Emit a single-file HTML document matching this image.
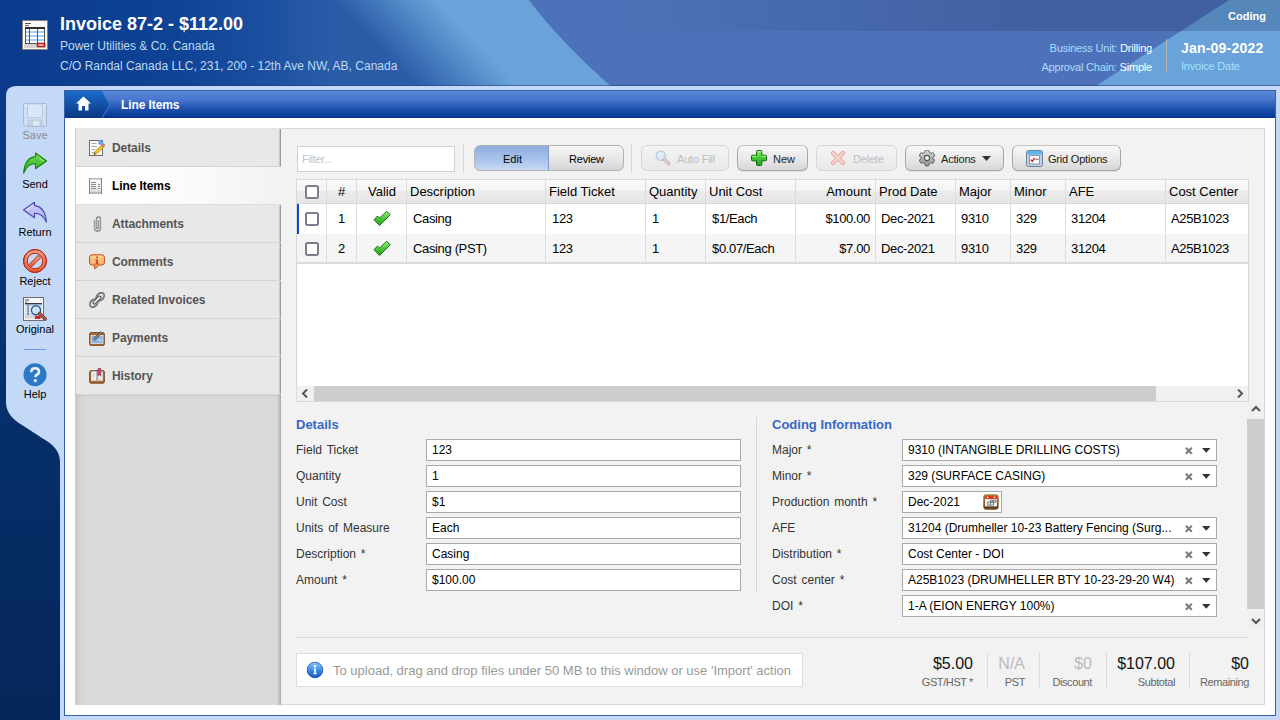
<!DOCTYPE html>
<html><head><meta charset="utf-8">
<style>
*{box-sizing:border-box;margin:0;padding:0}
html,body{width:1280px;height:720px;overflow:hidden;background:#c4d9f8;font-family:"Liberation Sans",sans-serif;font-size:12px;color:#000;position:relative}
.a{position:absolute}
.wt{color:#fff}
.tab{position:absolute;left:76px;width:205px;height:38px;background:#e8e8e8;border-bottom:1px solid #d4d4d4;box-shadow:inset -3px 0 2px -2px rgba(0,0,0,0.45);font-weight:bold;font-size:12px;color:#555}
.tab span{position:absolute;left:36px;top:12px;letter-spacing:-0.08px;white-space:nowrap}
.tab svg{position:absolute;left:12px;top:11px}
.lbl{position:absolute;font-size:12px;color:#333;white-space:nowrap;word-spacing:1.5px}
.inp{position:absolute;height:22px;background:#fff;border:1px solid #a9a9a9;font-size:12px;padding:3px 0 0 5px;white-space:nowrap;overflow:hidden}
.btn{position:absolute;top:145px;height:26px;border:1px solid #a6a6a6;border-top-color:#c2c2c2;border-radius:6px;background:linear-gradient(#f7f7f7,#e8e8e8 55%,#d6d6d6);box-shadow:0 1px 0 rgba(0,0,0,0.06);font-size:12px;color:#222;white-space:nowrap}
.btn.dis{color:#bdbdbd;border-color:#d6d6d6;background:linear-gradient(#f4f4f4,#e9e9e9);box-shadow:none}
.hc{position:absolute;top:180px;height:25px;font-size:13px;color:#000;padding-top:5px;white-space:nowrap}
.cell{position:absolute;font-size:13px;white-space:nowrap}
.rc{letter-spacing:-0.35px}
.vl{position:absolute;width:1px;background:#dcdcdc}
</style></head><body>
<!-- HEADER -->
<div class="a" style="left:0;top:0;width:1280px;height:86px;overflow:hidden">
<svg width="1280" height="86" style="position:absolute;left:0;top:0">
<defs>
<linearGradient id="hbase" x1="0" y1="0" x2="1280" y2="0" gradientUnits="userSpaceOnUse">
<stop offset="0" stop-color="#0b3a8c"/><stop offset="0.14" stop-color="#0e4396"/><stop offset="0.2" stop-color="#1a4e9e"/><stop offset="0.26" stop-color="#2a5ca8"/><stop offset="1" stop-color="#2c5eaa"/>
</linearGradient>
<linearGradient id="hglow" x1="400" y1="68" x2="452" y2="18" gradientUnits="userSpaceOnUse">
<stop offset="0" stop-color="#69a3d9" stop-opacity="0"/><stop offset="0.5" stop-color="#69a3d9" stop-opacity="0.5"/><stop offset="1" stop-color="#69a3d9" stop-opacity="1"/>
</linearGradient>
<linearGradient id="hband" x1="600" y1="0" x2="1050" y2="0" gradientUnits="userSpaceOnUse">
<stop offset="0" stop-color="#001040" stop-opacity="0"/><stop offset="1" stop-color="#001038" stop-opacity="0.19"/>
</linearGradient>
</defs>
<rect width="1280" height="86" fill="url(#hbase)"/>
<path d="M250 0 L529 0 Q562 43 611 86 L280 86 Z" fill="url(#hglow)"/>
<path d="M529 0 Q562 43 611 86 L1280 86 L1280 0 Z" fill="#4e72b9"/>
<path d="M1229 0 L1280 0 L1280 86 L1096 86 Z" fill="#69a3d9"/>
<rect x="560" y="0" width="720" height="31" fill="url(#hband)"/>
<rect x="0" y="85" width="1280" height="1" fill="#1a3a78" fill-opacity="0.5"/>
</svg>
<svg class="a" style="left:22px;top:20px" width="26" height="30" viewBox="0 0 26 30"><rect x="0.5" y="0.5" width="25" height="29" fill="#f8f8f8" stroke="#8a7f72"/><rect x="3" y="3" width="6" height="1" fill="#555"/><rect x="3" y="5" width="4" height="1" fill="#666"/><rect x="3.5" y="7.5" width="19" height="16" fill="#fff" stroke="#555"/><rect x="3" y="7" width="20" height="2" fill="#2e2e2e"/><rect x="4" y="11" width="18" height="2" fill="#a8d0f4"/><rect x="4" y="15" width="18" height="2" fill="#a8d0f4"/><rect x="4" y="19" width="18" height="2" fill="#a8d0f4"/><path d="M7.5 9 V23 M15.5 9 V23" stroke="#555" stroke-width="1"/><rect x="2" y="24" width="22" height="4" fill="#d4d4d4"/><rect x="15" y="23" width="8" height="4" fill="#d42020" stroke="#a81010" stroke-width="0.5"/><rect x="16.5" y="24.3" width="5" height="1.4" fill="#fbe6e6"/></svg>
<div class="a wt" style="left:60px;top:14px;font-size:18px;font-weight:bold;white-space:nowrap">Invoice 87-2 - $112.00</div>
<div class="a" style="left:60px;top:39px;font-size:12px;color:#bfdbf3;white-space:nowrap">Power Utilities &amp; Co. Canada</div>
<div class="a" style="left:60px;top:59px;font-size:12px;color:#bfdbf3;white-space:nowrap">C/O Randal Canada LLC, 231, 200 - 12th Ave NW, AB, Canada</div>
<div class="a wt" style="left:1228px;top:10px;font-size:11px;font-weight:bold">Coding</div>
<div class="a" style="right:128px;top:42px;font-size:11px;color:#a8dcff;white-space:nowrap;text-align:right;letter-spacing:-0.2px">Business Unit: <span style="color:#fff">Drilling</span></div>
<div class="a" style="right:128px;top:61px;font-size:11px;color:#a8dcff;white-space:nowrap;text-align:right;letter-spacing:-0.2px">Approval Chain: <span style="color:#fff">Simple</span></div>
<div class="a" style="left:1166px;top:39px;width:1px;height:34px;background:#bcb4a8"></div>
<div class="a wt" style="left:1181px;top:40px;font-size:14px;font-weight:bold;white-space:nowrap;letter-spacing:0.2px">Jan-09-2022</div>
<div class="a" style="left:1181px;top:60px;font-size:11px;color:#a4e0ff;white-space:nowrap;letter-spacing:-0.2px">Invoice Date</div>
</div>
<!-- LEFT SIDE -->
<svg class="a" style="left:0;top:86px" width="64" height="634">
<defs><linearGradient id="sdk" x1="0" y1="0" x2="0" y2="1"><stop offset="0" stop-color="#0a3b8a"/><stop offset="0.5" stop-color="#06306c"/><stop offset="1" stop-color="#052659"/></linearGradient></defs>
<rect width="64" height="634" fill="url(#sdk)"/>
<path d="M16 0 L64 0 L64 634 L60 634 L60 376 C60 364 52 358 42 352 L22 339 C12 333 6 326 6 316 L6 10 Q6 0 16 0 Z" fill="#c4d9f8"/>
</svg>
<!-- FRAME -->
<div class="a" style="left:64px;top:90px;width:1212px;height:626px;border:1px solid #3862a8;background:#fff"></div>
<div class="a" style="left:65px;top:91px;width:1210px;height:27px;background:linear-gradient(#5a88d8,#4a78d0 30%,#2a5cb8 55%,#1246a4 80%,#0a3c98 94%,#022a78)"></div>
<svg class="a" style="left:65px;top:91px" width="48" height="27">
<defs><linearGradient id="hm" x1="0" y1="0" x2="0" y2="1"><stop offset="0" stop-color="#1a6ccc"/><stop offset="1" stop-color="#0b3680"/></linearGradient></defs>
<path d="M0 0 L37 0 L45 13.5 L37 27 L0 27 Z" fill="url(#hm)"/>
<path d="M37 0 L45 13.5 L37 27" fill="none" stroke="#3c7ad8" stroke-width="1"/>
</svg>
<svg class="a" style="left:76px;top:96px" width="15" height="15" viewBox="0 0 15 15">
<path d="M7.5 0.5 L15 7.5 L12.5 7.5 L12.5 14.5 L9 14.5 L9 10 L6 10 L6 14.5 L2.5 14.5 L2.5 7.5 L0 7.5 Z" fill="#fff"/>
</svg>
<div class="a wt" style="left:121px;top:98px;font-size:12px;font-weight:bold;letter-spacing:-0.1px">Line Items</div>
<!-- TABS SIDEBAR -->
<div class="a" style="left:75px;top:128px;width:206px;height:577px;background:#d9d9d9;border-left:1px solid #cfcfcf"></div>
<div class="a" style="left:76px;top:395px;width:205px;height:310px;background:linear-gradient(90deg,#c9c9c9,#d6d6d6 4px,#dadada 10px,#dadada 201px,#c4c4c4 203px,#a8a8a8)"></div>
<div class="a" style="left:76px;top:395px;width:205px;height:3px;background:linear-gradient(rgba(0,0,0,0.06),rgba(0,0,0,0))"></div>
<div class="a" style="left:76px;top:128px;width:205px;height:1px;background:#e3e3e3"></div>
<div class="tab" style="top:129px"><svg style="position:absolute;left:13px;top:11px" width="16" height="18"><rect x="0.5" y="0.5" width="13" height="15" fill="#fafafa" stroke="#6a6a6a"/><path d="M2.5 3.5h5M2.5 6.5h5.5M2.5 9.5h3.5M2.5 12.5h3" stroke="#a8a8a8" stroke-width="1.1"/><path d="M9.5 0.5 L13.5 4.5 L13.5 0.5 Z" fill="#5aa0e6"/><path d="M9.5 0.5 H13.5 V4.5 H9.5 Z" fill="#4a90e0"/><path d="M10.2 1.2 L12.8 3.8" stroke="#cfe6fb" stroke-width="0.8"/><path d="M5 14.5 L6 11.5 L12.5 5 L14.5 7 L8 13.5 Z" fill="#f2c418" stroke="#b87a10" stroke-width="0.7"/><path d="M12.5 5 L13.6 3.9 Q14.2 3.4 14.8 4 L15.6 4.8 Q16 5.4 15.5 5.9 L14.5 7 Z" fill="#e88a94" stroke="#9a4a50" stroke-width="0.6"/><path d="M5 14.5 L5.5 12.8 L6.8 14 Z" fill="#111"/></svg><span>Details</span></div>
<div class="tab" style="top:167px;background:linear-gradient(90deg,#fff,#fdfdfd 40%,#f2f2f2);color:#000;border-bottom-color:#dedede;box-shadow:none;width:205px"><svg style="position:absolute;left:13px;top:10px" width="16" height="18"><defs><linearGradient id="gli" x1="0" y1="0" x2="0" y2="1"><stop offset="0" stop-color="#fafafa"/><stop offset="0.6" stop-color="#f0f0f0"/><stop offset="1" stop-color="#c8c8c8"/></linearGradient></defs><path d="M0.5 1 L2 2.5 L3.5 1 L5 2.5 L6.5 1 L8 2.5 L9.5 1 L11 2.5 L12.5 1 V17 L11 15.5 L9.5 17 L8 15.5 L6.5 17 L5 15.5 L3.5 17 L2 15.5 L0.5 17 Z" fill="url(#gli)" stroke="#7a7a7a" stroke-width="0.9"/><path d="M2 5.5h5M2 7.5h5M2 9.5h5M2 11.5h5M9 7.5h2M9 9.5h2M9 11.5h2" stroke="#8a8a8a" stroke-width="1"/></svg><span>Line Items</span></div>
<div class="tab" style="top:205px"><svg style="position:absolute;left:13px;top:11px" width="16" height="18"><path d="M5.5 4 V12.5 Q5.5 15 8.5 15 Q11.5 15 11.5 12.5 V3 Q11.5 1 9.5 1 Q7.5 1 7.5 3 V11.5 Q7.5 12.5 8.5 12.5 Q9.5 12.5 9.5 11.5 V4" fill="none" stroke="#6a6a6a" stroke-width="1.3"/><path d="M5.5 4 V12.5 Q5.5 15 8.5 15 Q11.5 15 11.5 12.5 V3 Q11.5 1 9.5 1 Q7.5 1 7.5 3 V11.5 Q7.5 12.5 8.5 12.5 Q9.5 12.5 9.5 11.5 V4" fill="none" stroke="#e8e8e8" stroke-width="0.4"/></svg><span>Attachments</span></div>
<div class="tab" style="top:243px"><svg style="position:absolute;left:13px;top:11px" width="16" height="18"><defs><linearGradient id="gc" x1="0" y1="0" x2="0" y2="1"><stop offset="0" stop-color="#ffd49a"/><stop offset="1" stop-color="#f9a04a"/></linearGradient></defs><path d="M3 0.8 H13 Q15.4 0.8 15.4 3.2 V8.6 Q15.4 11 13 11 H10 L6.2 14.6 Q5.6 15 5.6 14.2 V11 H3 Q0.6 11 0.6 8.6 V3.2 Q0.6 0.8 3 0.8 Z" fill="url(#gc)" stroke="#c04a1c" stroke-width="1"/><rect x="7.2" y="2.6" width="1.8" height="1.6" fill="#c0441c"/><path d="M6.3 5.4 H9 V9.6 H10 V10.4 H6.2 V9.6 H7.2 V6.2 H6.3 Z" fill="#c0441c"/></svg><span>Comments</span></div>
<div class="tab" style="top:281px"><svg style="position:absolute;left:13px;top:11px" width="16" height="18"><ellipse cx="11.2" cy="4.8" rx="4.4" ry="3.2" transform="rotate(-45 11.2 4.8)" fill="none" stroke="#4a4a4a" stroke-width="1.8"/><ellipse cx="11.2" cy="4.8" rx="4.4" ry="3.2" transform="rotate(-45 11.2 4.8)" fill="none" stroke="#e6e6e6" stroke-width="0.5"/><ellipse cx="4.8" cy="11.2" rx="4.4" ry="3.2" transform="rotate(-45 4.8 11.2)" fill="none" stroke="#4a4a4a" stroke-width="1.8"/><ellipse cx="4.8" cy="11.2" rx="4.4" ry="3.2" transform="rotate(-45 4.8 11.2)" fill="none" stroke="#e6e6e6" stroke-width="0.5"/><path d="M5.2 10.8 L10.8 5.2" stroke="#4a4a4a" stroke-width="3.4" stroke-linecap="round"/><path d="M5.4 10.6 L10.6 5.4" stroke="#f6f6f6" stroke-width="1.6" stroke-linecap="round"/></svg><span>Related Invoices</span></div>
<div class="tab" style="top:319px"><svg style="position:absolute;left:13px;top:11px" width="16" height="18"><rect x="0.6" y="2.6" width="14.8" height="12.8" rx="1.5" fill="#b06a2c" stroke="#6a3a14" stroke-width="0.8"/><rect x="2" y="5.5" width="12" height="8" fill="#8ab4e8" stroke="#e8f0fb" stroke-width="0.7"/><path d="M9 9.5 H12.5 V11 H9 Z" fill="#c8dcf6"/><path d="M4.5 10 L12.5 2" stroke="#222" stroke-width="2.4"/><path d="M4.5 10 L12.5 2" stroke="#f4f4f4" stroke-width="1"/></svg><span>Payments</span></div>
<div class="tab" style="top:357px"><svg style="position:absolute;left:13px;top:11px" width="16" height="18"><rect x="0.6" y="2.6" width="14.8" height="12.6" rx="1.5" fill="#a8621e" stroke="#6a3a14" stroke-width="0.8"/><path d="M2 3.5 Q5 2.5 7.7 3.5 V13.2 Q5 12.4 2 13.2 Z" fill="#f0f0f0" stroke="#999" stroke-width="0.5"/><path d="M8.3 3.5 Q11 2.5 14 3.5 V13.2 Q11 12.4 8.3 13.2 Z" fill="#e6e6e6" stroke="#999" stroke-width="0.5"/><path d="M9 0.6 H11.8 V8 L10.4 6.8 L9 8 Z" fill="#c2457a" stroke="#8a2a52" stroke-width="0.5"/><path d="M3.5 6h2.5M3.5 8h2.5" stroke="#bbb" stroke-width="0.8"/></svg><span>History</span></div>
<!-- CONTENT -->
<div class="a" style="left:281px;top:128px;width:984px;height:577px;background:#f2f2f2;border:1px solid #d7d7d7;border-left:none"></div>

<!-- TOOLBAR -->
<div class="a" style="left:297px;top:146px;width:158px;height:26px;background:#fff;border:1px solid #d2d2d2;color:#c4c4c4;font-size:11px;padding:6px 0 0 4px;letter-spacing:-0.3px">Filter...</div>
<div class="a" style="left:463px;top:144px;width:1px;height:29px;background:#d9d9d9"></div>
<div class="a" style="left:474px;top:145px;width:150px;height:26px;border:1px solid #b2b2b2;border-radius:6px;overflow:hidden;background:linear-gradient(#f6f6f6,#e6e6e6 55%,#d4d4d4)">
 <div class="a" style="left:-1px;top:-1px;width:75px;height:26px;background:linear-gradient(#8eace0,#a6c0ea 50%,#c6d8f2);border:1px solid #7f9ccc;border-radius:6px 0 0 6px"></div>
 <div class="a" style="left:28px;top:7px;font-size:11px;">Edit</div>
 <div class="a" style="left:94px;top:7px;font-size:11px;letter-spacing:-0.2px">Review</div>
</div>
<div class="a" style="left:631px;top:144px;width:1px;height:29px;background:#d9d9d9"></div>
<div class="btn dis" style="left:641px;width:88px"><svg class="a" style="left:13px;top:4px" width="17" height="17" viewBox="0 0 17 17"><circle cx="5.8" cy="5.8" r="4.6" fill="#dde9f6" stroke="#b4cae0" stroke-width="1.2"/><path d="M4 4.5 L6.5 3.5" stroke="#f4f8fc" stroke-width="1"/><path d="M9.4 9.4 L13.6 13.6" stroke="#c8b0b0" stroke-width="3.6" stroke-linecap="round"/><path d="M9.4 9.4 L13.6 13.6" stroke="#e2d2d2" stroke-width="1.6" stroke-linecap="round"/></svg><span class="a" style="left:35px;top:7px;font-size:11px;letter-spacing:-0.2px">Auto Fill</span></div>
<div class="btn" style="left:737px;width:71px"><svg class="a" style="left:13px;top:4px" width="17" height="17" viewBox="0 0 17 17"><defs><linearGradient id="gp" x1="0" y1="0" x2="0" y2="1"><stop offset="0" stop-color="#8cf070"/><stop offset="0.5" stop-color="#44c830"/><stop offset="1" stop-color="#22a014"/></linearGradient></defs><path d="M5.5 1.5 Q5.5 0.5 6.5 0.5 H9.8 Q10.8 0.5 10.8 1.5 V5.2 H14.5 Q15.5 5.2 15.5 6.2 V9.8 Q15.5 10.8 14.5 10.8 H10.8 V14.5 Q10.8 15.5 9.8 15.5 H6.5 Q5.5 15.5 5.5 14.5 V10.8 H1.5 Q0.5 10.8 0.5 9.8 V6.2 Q0.5 5.2 1.5 5.2 H5.5 Z" fill="url(#gp)" stroke="#0c640c" stroke-width="1"/><path d="M6.5 1.6 H9.8 M1.6 6.3 H5 M11.3 6.3 H14.5" stroke="#c8ffb0" stroke-width="0.9"/></svg><span class="a" style="left:35px;top:7px;font-size:11px">New</span></div>
<div class="btn dis" style="left:816px;width:81px"><svg class="a" style="left:13px;top:4px" width="17" height="17" viewBox="0 0 17 17"><path d="M3 3 L13 13 M13 3 L3 13" stroke="#e6a4a0" stroke-width="4.4" stroke-linecap="round"/><path d="M3 3 L13 13 M13 3 L3 13" stroke="#f6d2ca" stroke-width="2.6" stroke-linecap="round"/></svg><span class="a" style="left:36px;top:7px;font-size:11px;letter-spacing:-0.2px">Delete</span></div>
<div class="btn" style="left:905px;width:99px"><svg class="a" style="left:13px;top:4px" width="17" height="17" viewBox="0 0 17 17"><defs><linearGradient id="gg" x1="0" y1="0" x2="0" y2="1"><stop offset="0" stop-color="#dcdcdc"/><stop offset="1" stop-color="#8e8e8e"/></linearGradient></defs><g transform="translate(8 8)"><path d="M-1.8 -7.6 Q0 -8.6 1.8 -7.6 L2.3 -5.5 L4 -4.6 L5.6 -5.6 Q7.2 -4.3 7.6 -1.8 L5.8 -0.7 V0.9 L7.6 1.8 Q7.2 4.3 5.6 5.6 L4 4.6 L2.3 5.5 L1.8 7.6 Q0 8.6 -1.8 7.6 L-2.3 5.5 L-4 4.6 L-5.6 5.6 Q-7.2 4.3 -7.6 1.8 L-5.8 0.9 V-0.7 L-7.6 -1.8 Q-7.2 -4.3 -5.6 -5.6 L-4 -4.6 L-2.3 -5.5 Z" fill="url(#gg)" stroke="#5a5a5a" stroke-width="0.9"/><circle r="2.6" fill="#efefef" stroke="#555" stroke-width="1.1"/></g></svg><span class="a" style="left:35px;top:7px;font-size:11px;letter-spacing:-0.2px">Actions</span><svg class="a" style="left:76px;top:10px" width="9" height="5"><path d="M0 0 H9 L4.5 5 Z" fill="#333"/></svg></div>
<div class="btn" style="left:1012px;width:109px"><svg class="a" style="left:13px;top:4px" width="17" height="17" viewBox="0 0 17 17"><rect x="0.5" y="0.5" width="16" height="16" rx="2" fill="#c4d0e2" stroke="#6a8098"/><rect x="1" y="1" width="15" height="3.5" rx="1.5" fill="#5ab4f0"/><rect x="3.5" y="5.5" width="10" height="8.5" fill="#fff" stroke="#7a8ea4" stroke-width="0.9"/><path d="M4.8 9.6 L6.3 11.4 L8.6 8" fill="none" stroke="#d42020" stroke-width="1.4"/><path d="M9.3 9.3 H12.6" stroke="#777" stroke-width="1.1"/></svg><span class="a" style="left:35px;top:7px;font-size:11px;letter-spacing:-0.2px">Grid Options</span></div>
<!-- GRID -->
<div class="a" style="left:296px;top:179px;width:953px;height:223px;background:#fff;border:1px solid #d8d8d8"></div>
<div class="a" style="left:297px;top:180px;width:951px;height:23px;background:linear-gradient(#f9f9f9,#f4f4f4 45%,#ebebec 50%,#e6e6e7)"></div>
<div class="a" style="left:297px;top:203px;width:951px;height:1px;background:#d6d6d6"></div>
<div class="a" style="left:297px;top:234px;width:951px;height:28px;background:#f5f5f5"></div>
<div class="a" style="left:297px;top:262px;width:951px;height:2px;background:#dcdcdc"></div>
<div class="a" style="left:297px;top:204px;width:2px;height:30px;background:#0a48d0"></div>
<div class="vl" style="left:326px;top:180px;height:82px"></div>
<div class="vl" style="left:356px;top:180px;height:82px"></div>
<div class="vl" style="left:406px;top:180px;height:82px"></div>
<div class="vl" style="left:545px;top:180px;height:82px"></div>
<div class="vl" style="left:645px;top:180px;height:82px"></div>
<div class="vl" style="left:705px;top:180px;height:82px"></div>
<div class="vl" style="left:795px;top:180px;height:82px"></div>
<div class="vl" style="left:875px;top:180px;height:82px"></div>
<div class="vl" style="left:955px;top:180px;height:82px"></div>
<div class="vl" style="left:1010px;top:180px;height:82px"></div>
<div class="vl" style="left:1065px;top:180px;height:82px"></div>
<div class="vl" style="left:1165px;top:180px;height:82px"></div>
<div class="cell" style="left:338px;top:184px">#</div>
<div class="cell" style="left:368px;top:184px">Valid</div>
<div class="cell" style="left:410px;top:184px">Description</div>
<div class="cell" style="left:549px;top:184px">Field Ticket</div>
<div class="cell" style="left:649px;top:184px">Quantity</div>
<div class="cell" style="left:709px;top:184px">Unit Cost</div>
<div class="cell" style="left:879px;top:184px">Prod Date</div>
<div class="cell" style="left:959px;top:184px">Major</div>
<div class="cell" style="left:1014px;top:184px">Minor</div>
<div class="cell" style="left:1069px;top:184px">AFE</div>
<div class="cell" style="left:1169px;top:184px">Cost Center</div>
<div class="cell" style="left:796px;width:75px;text-align:right;top:184px">Amount</div>
<div class="a" style="left:305px;top:212px;width:14px;height:14px;border:2px solid #7d7c8e;border-radius:2.5px;background:#fff"></div>
<svg class="a" style="left:373px;top:210px" width="19" height="17" viewBox="0 0 19 17"><defs><linearGradient id="gk210" x1="0" y1="0" x2="0" y2="1"><stop offset="0" stop-color="#a2f08a"/><stop offset="0.5" stop-color="#4cc838"/><stop offset="1" stop-color="#2aa01a"/></linearGradient></defs><path d="M4.5 6 L1 9.7 L6.6 15.5 L17.2 4.8 L13.7 1.2 L6.6 8.1 Z" fill="url(#gk210)" stroke="#137010" stroke-width="1" stroke-linejoin="miter"/></svg>
<div class="cell rc" style="left:338px;top:211px">1</div>
<div class="cell rc" style="left:413px;top:211px">Casing</div>
<div class="cell rc" style="left:552px;top:211px">123</div>
<div class="cell rc" style="left:652px;top:211px">1</div>
<div class="cell rc" style="left:712px;top:211px">$1/Each</div>
<div class="cell rc" style="left:796px;width:74px;text-align:right;top:211px">$100.00</div>
<div class="cell rc" style="left:881px;top:211px">Dec-2021</div>
<div class="cell rc" style="left:961px;top:211px">9310</div>
<div class="cell rc" style="left:1016px;top:211px">329</div>
<div class="cell rc" style="left:1071px;top:211px">31204</div>
<div class="cell rc" style="left:1171px;top:211px">A25B1023</div>
<div class="a" style="left:305px;top:242px;width:14px;height:14px;border:2px solid #7d7c8e;border-radius:2.5px;background:#fff"></div>
<svg class="a" style="left:373px;top:240px" width="19" height="17" viewBox="0 0 19 17"><defs><linearGradient id="gk240" x1="0" y1="0" x2="0" y2="1"><stop offset="0" stop-color="#a2f08a"/><stop offset="0.5" stop-color="#4cc838"/><stop offset="1" stop-color="#2aa01a"/></linearGradient></defs><path d="M4.5 6 L1 9.7 L6.6 15.5 L17.2 4.8 L13.7 1.2 L6.6 8.1 Z" fill="url(#gk240)" stroke="#137010" stroke-width="1" stroke-linejoin="miter"/></svg>
<div class="cell rc" style="left:338px;top:241px">2</div>
<div class="cell rc" style="left:413px;top:241px">Casing (PST)</div>
<div class="cell rc" style="left:552px;top:241px">123</div>
<div class="cell rc" style="left:652px;top:241px">1</div>
<div class="cell rc" style="left:712px;top:241px">$0.07/Each</div>
<div class="cell rc" style="left:796px;width:74px;text-align:right;top:241px">$7.00</div>
<div class="cell rc" style="left:881px;top:241px">Dec-2021</div>
<div class="cell rc" style="left:961px;top:241px">9310</div>
<div class="cell rc" style="left:1016px;top:241px">329</div>
<div class="cell rc" style="left:1071px;top:241px">31204</div>
<div class="cell rc" style="left:1171px;top:241px">A25B1023</div>
<div class="a" style="left:305px;top:185px;width:14px;height:14px;border:2px solid #7d7c8e;border-radius:2.5px;background:#fff"></div>

<!-- HSCROLL -->
<div class="a" style="left:297px;top:386px;width:951px;height:15px;background:#f0f0f0"></div>
<div class="a" style="left:314px;top:386px;width:842px;height:15px;background:#cdcdcd"></div>
<svg class="a" style="left:301px;top:389px" width="8" height="9"><path d="M6 0.5 L2 4.5 L6 8.5" fill="none" stroke="#555" stroke-width="2"/></svg>
<svg class="a" style="left:1236px;top:389px" width="8" height="9"><path d="M2 0.5 L6 4.5 L2 8.5" fill="none" stroke="#555" stroke-width="2"/></svg>
<!-- VSCROLL -->
<div class="a" style="left:1248px;top:402px;width:16px;height:228px;background:#f0f0f0"></div>
<div class="a" style="left:1247px;top:419px;width:17px;height:190px;background:#cdcdcd"></div>
<svg class="a" style="left:1251px;top:405px" width="10" height="7"><path d="M1 6 L5 2 L9 6" fill="none" stroke="#555" stroke-width="2"/></svg>
<svg class="a" style="left:1251px;top:618px" width="10" height="7"><path d="M1 1 L5 5 L9 1" fill="none" stroke="#555" stroke-width="2"/></svg>
<!-- DETAILS FORM -->
<div class="a" style="left:296px;top:417px;font-size:13px;font-weight:bold;color:#3868c4">Details</div>
<div class="a" style="left:756px;top:417px;width:1px;height:175px;background:#d8d8d8"></div>
<div class="a" style="left:772px;top:417px;font-size:13px;font-weight:bold;color:#3868c4">Coding Information</div>
<div class="lbl" style="left:296px;top:443px">Field Ticket</div>
<div class="inp" style="left:426px;top:439px;width:315px">123</div>
<div class="lbl" style="left:296px;top:469px">Quantity</div>
<div class="inp" style="left:426px;top:465px;width:315px">1</div>
<div class="lbl" style="left:296px;top:495px">Unit Cost</div>
<div class="inp" style="left:426px;top:491px;width:315px">$1</div>
<div class="lbl" style="left:296px;top:521px">Units of Measure</div>
<div class="inp" style="left:426px;top:517px;width:315px">Each</div>
<div class="lbl" style="left:296px;top:547px">Description *</div>
<div class="inp" style="left:426px;top:543px;width:315px">Casing</div>
<div class="lbl" style="left:296px;top:573px">Amount *</div>
<div class="inp" style="left:426px;top:569px;width:315px">$100.00</div>
<div class="lbl" style="left:772px;top:443px">Major *</div>
<div class="inp" style="left:902px;top:439px;width:315px">9310 (INTANGIBLE DRILLING COSTS)</div>
<svg class="a" style="left:1185px;top:447px" width="8" height="8"><path d="M0.8 0.8 L6.8 6.8 M6.8 0.8 L0.8 6.8" stroke="#7a7a7a" stroke-width="2"/></svg>
<svg class="a" style="left:1202px;top:448px" width="9" height="6"><path d="M0 0 H8.5 L4.25 4.8 Z" fill="#333"/></svg>
<div class="lbl" style="left:772px;top:469px">Minor *</div>
<div class="inp" style="left:902px;top:465px;width:315px">329 (SURFACE CASING)</div>
<svg class="a" style="left:1185px;top:473px" width="8" height="8"><path d="M0.8 0.8 L6.8 6.8 M6.8 0.8 L0.8 6.8" stroke="#7a7a7a" stroke-width="2"/></svg>
<svg class="a" style="left:1202px;top:474px" width="9" height="6"><path d="M0 0 H8.5 L4.25 4.8 Z" fill="#333"/></svg>
<div class="lbl" style="left:772px;top:495px">Production month *</div>
<div class="inp" style="left:902px;top:491px;width:100px">Dec-2021</div>
<svg class="a" style="left:983px;top:494px" width="16" height="16" viewBox="0 0 16 16"><defs><linearGradient id="gcal" x1="0" y1="0" x2="0" y2="1"><stop offset="0" stop-color="#b27838"/><stop offset="1" stop-color="#7a4212"/></linearGradient></defs><rect x="0.3" y="0.3" width="15.4" height="15.4" rx="3" fill="url(#gcal)"/><rect x="2" y="2" width="12" height="3" fill="#e03c1c"/><circle cx="4.5" cy="3.4" r="0.8" fill="#fff"/><circle cx="11.5" cy="3.4" r="0.8" fill="#fff"/><rect x="2" y="5" width="12" height="7.6" fill="#eef0f2"/><rect x="2" y="12.6" width="12" height="1.2" fill="#3a3e44"/><path d="M4.5 8.2h3v3h-3zM7.5 8.2h3v3h-3zM7.5 6.2h2.8v2h-2.8zM10.3 6.2h2.8v2h-2.8z" fill="none" stroke="#707070" stroke-width="0.9"/></svg>
<div class="lbl" style="left:772px;top:521px">AFE</div>
<div class="inp" style="left:902px;top:517px;width:315px">31204 (Drumheller 10-23 Battery Fencing (Surg...</div>
<svg class="a" style="left:1185px;top:525px" width="8" height="8"><path d="M0.8 0.8 L6.8 6.8 M6.8 0.8 L0.8 6.8" stroke="#7a7a7a" stroke-width="2"/></svg>
<svg class="a" style="left:1202px;top:526px" width="9" height="6"><path d="M0 0 H8.5 L4.25 4.8 Z" fill="#333"/></svg>
<div class="lbl" style="left:772px;top:547px">Distribution *</div>
<div class="inp" style="left:902px;top:543px;width:315px">Cost Center - DOI</div>
<svg class="a" style="left:1185px;top:551px" width="8" height="8"><path d="M0.8 0.8 L6.8 6.8 M6.8 0.8 L0.8 6.8" stroke="#7a7a7a" stroke-width="2"/></svg>
<svg class="a" style="left:1202px;top:552px" width="9" height="6"><path d="M0 0 H8.5 L4.25 4.8 Z" fill="#333"/></svg>
<div class="lbl" style="left:772px;top:573px">Cost center *</div>
<div class="inp" style="left:902px;top:569px;width:315px">A25B1023 (DRUMHELLER BTY 10-23-29-20 W4)</div>
<svg class="a" style="left:1185px;top:577px" width="8" height="8"><path d="M0.8 0.8 L6.8 6.8 M6.8 0.8 L0.8 6.8" stroke="#7a7a7a" stroke-width="2"/></svg>
<svg class="a" style="left:1202px;top:578px" width="9" height="6"><path d="M0 0 H8.5 L4.25 4.8 Z" fill="#333"/></svg>
<div class="lbl" style="left:772px;top:599px">DOI *</div>
<div class="inp" style="left:902px;top:595px;width:315px">1-A (EION ENERGY 100%)</div>
<svg class="a" style="left:1185px;top:603px" width="8" height="8"><path d="M0.8 0.8 L6.8 6.8 M6.8 0.8 L0.8 6.8" stroke="#7a7a7a" stroke-width="2"/></svg>
<svg class="a" style="left:1202px;top:604px" width="9" height="6"><path d="M0 0 H8.5 L4.25 4.8 Z" fill="#333"/></svg>

<!-- BOTTOM -->
<div class="a" style="left:296px;top:637px;width:953px;height:1px;background:#dadada"></div>
<div class="a" style="left:296px;top:653px;width:507px;height:34px;background:#fff;border:1px solid #dcdcdc"></div>
<svg class="a" style="left:306px;top:661px" width="18" height="18" viewBox="0 0 18 18"><defs><linearGradient id="ig" x1="0" y1="0" x2="0" y2="1"><stop offset="0" stop-color="#8cc8f8"/><stop offset="0.5" stop-color="#3a8ee6"/><stop offset="1" stop-color="#1654c0"/></linearGradient></defs><circle cx="9" cy="9" r="7.8" fill="url(#ig)" stroke="#1a4eb0" stroke-width="0.8"/><circle cx="9" cy="5.2" r="1.2" fill="#fff"/><path d="M7.3 7.4 H9.9 V12.2 H10.9 V13.2 H7.2 V12.2 H8.2 V8.4 H7.3 Z" fill="#fff"/></svg>
<div class="a" style="left:333px;top:663px;font-size:13px;color:#999;white-space:nowrap">To upload, drag and drop files under 50 MB to this window or use 'Import' action</div>
<div class="a" style="left:873px;width:100px;text-align:right;top:655px;font-size:16px;color:#111">$5.00</div>
<div class="a" style="left:873px;width:100px;text-align:right;top:676px;font-size:11px;color:#666;letter-spacing:-0.4px">GST/HST *</div>
<div class="a" style="left:925px;width:100px;text-align:right;top:655px;font-size:16px;color:#bbb">N/A</div>
<div class="a" style="left:925px;width:100px;text-align:right;top:676px;font-size:11px;color:#666;letter-spacing:-0.4px">PST</div>
<div class="a" style="left:992px;width:100px;text-align:right;top:655px;font-size:16px;color:#bbb">$0</div>
<div class="a" style="left:992px;width:100px;text-align:right;top:676px;font-size:11px;color:#666;letter-spacing:-0.4px">Discount</div>
<div class="a" style="left:1075px;width:100px;text-align:right;top:655px;font-size:16px;color:#111">$107.00</div>
<div class="a" style="left:1075px;width:100px;text-align:right;top:676px;font-size:11px;color:#666;letter-spacing:-0.4px">Subtotal</div>
<div class="a" style="left:1149px;width:100px;text-align:right;top:655px;font-size:16px;color:#111">$0</div>
<div class="a" style="left:1149px;width:100px;text-align:right;top:676px;font-size:11px;color:#666;letter-spacing:-0.4px">Remaining</div>
<div class="a" style="left:987px;top:653px;width:1px;height:35px;background:#dcdcdc"></div>
<div class="a" style="left:1039px;top:653px;width:1px;height:35px;background:#dcdcdc"></div>
<div class="a" style="left:1106px;top:653px;width:1px;height:35px;background:#dcdcdc"></div>
<div class="a" style="left:1189px;top:653px;width:1px;height:35px;background:#dcdcdc"></div>
<div class="a" style="left:0;width:70px;text-align:center;top:129px;font-size:11px;color:#8a8a8a">Save</div>
<div class="a" style="left:0;width:70px;text-align:center;top:178px;font-size:11px;color:#000">Send</div>
<div class="a" style="left:0;width:70px;text-align:center;top:226px;font-size:11px;color:#000">Return</div>
<div class="a" style="left:0;width:70px;text-align:center;top:275px;font-size:11px;color:#000">Reject</div>
<div class="a" style="left:0;width:70px;text-align:center;top:323px;font-size:11px;color:#000">Original</div>
<div class="a" style="left:0;width:70px;text-align:center;top:388px;font-size:11px;color:#000">Help</div>

<svg class="a" style="left:22px;top:102px" width="26" height="26" viewBox="0 0 26 26"><path d="M2.5 1.5 H23.5 Q24.5 1.5 24.5 2.5 V23.5 Q24.5 24.5 23.5 24.5 H4 L1.5 22 V2.5 Q1.5 1.5 2.5 1.5 Z" fill="#cfdff4" stroke="#a9b9cd" stroke-width="1"/><rect x="3" y="2.5" width="2" height="2" fill="#e6effb"/><rect x="21" y="2.5" width="2" height="2" fill="#e6effb"/><rect x="5.5" y="2" width="15" height="13.5" fill="#d9e7fa" stroke="#b3c2d6" stroke-width="0.8"/><path d="M6 24 V18.5 Q6 18 7 18 H19 Q20 18 20 18.5 V24 Z" fill="#c4d2e2" stroke="#b0bccc" stroke-width="0.6"/><rect x="11" y="18.8" width="6.5" height="5" fill="#dfe9f6"/></svg>
<svg class="a" style="left:22px;top:151px" width="26" height="24" viewBox="0 0 26 24"><defs><linearGradient id="gs" x1="0" y1="0" x2="0" y2="1"><stop offset="0" stop-color="#72dc52"/><stop offset="1" stop-color="#2ca81e"/></linearGradient></defs><path d="M1.6 22.2 Q2.5 7 13.5 5.6 V2 L24.6 10 L13.5 17.8 V12.8 Q5.5 12.6 1.6 22.2 Z" fill="url(#gs)" stroke="#138a10" stroke-width="1.1" stroke-linejoin="round"/><path d="M14.5 4.2 L22.5 10 L20 10 Z" fill="#b8f0a0" opacity="0.7"/></svg>
<svg class="a" style="left:22px;top:201px" width="26" height="23" viewBox="0 0 26 23"><defs><linearGradient id="gr" x1="0" y1="0" x2="0" y2="1"><stop offset="0" stop-color="#d2d0fb"/><stop offset="1" stop-color="#aaa6f2"/></linearGradient></defs><path d="M24.4 21.2 Q23.5 6 12.5 4.6 V1.2 L1.5 9 L12.5 16.8 V12.2 Q20.5 12 24.4 21.2 Z" fill="url(#gr)" stroke="#4a48b0" stroke-width="1.1" stroke-linejoin="round"/><path d="M11.5 3.2 L3.5 9 L6 9 Z" fill="#f2f0ff" opacity="0.8"/></svg>
<svg class="a" style="left:23px;top:249px" width="24" height="24" viewBox="0 0 24 24"><defs><linearGradient id="gj" x1="0" y1="0" x2="0" y2="1"><stop offset="0" stop-color="#f6a08a"/><stop offset="1" stop-color="#ec5a34"/></linearGradient></defs><path fill-rule="evenodd" d="M12 0.6 A11.4 11.4 0 1 1 11.99 0.6 Z M12 4.3 A7.7 7.7 0 1 0 12.01 4.3 Z" fill="url(#gj)" stroke="#b42a14" stroke-width="1"/><path d="M6.2 15.4 L15.4 6.2 L17.8 8.6 L8.6 17.8 Z" fill="url(#gj)" stroke="#b42a14" stroke-width="1"/><path d="M12 0.6 A11.4 11.4 0 1 1 11.99 0.6 Z" fill="none" stroke="#b42a14" stroke-width="1"/></svg>
<svg class="a" style="left:23px;top:297px" width="25" height="25" viewBox="0 0 25 25"><rect x="0.5" y="0.5" width="20" height="23" fill="#f6f6f6" stroke="#6e6e6e"/><rect x="2" y="2.5" width="4" height="1" fill="#555"/><rect x="2" y="4.5" width="2.5" height="1" fill="#777"/><rect x="2" y="6" width="17" height="1.6" fill="#3a3a3a"/><rect x="2" y="7.6" width="17" height="10.6" fill="#bcdaf5"/><rect x="2" y="9.6" width="17" height="1" fill="#f2f8fe"/><rect x="2" y="12.2" width="17" height="1" fill="#f2f8fe"/><rect x="2" y="14.8" width="17" height="1" fill="#f2f8fe"/><rect x="4.6" y="7.6" width="0.9" height="10.6" fill="#4a4a4a"/><rect x="2" y="18.2" width="17" height="3.3" fill="#d6d6d6"/><rect x="12" y="19" width="5.5" height="3" fill="#d82020"/><circle cx="13" cy="13.2" r="4.5" fill="#d6ecfb" fill-opacity="0.92" stroke="#2a5a8e" stroke-width="1.4"/><path d="M13 9.5 V17" stroke="#9cc4e8" stroke-width="0.6"/><path d="M16.4 16.6 L22.2 22" stroke="#6a3430" stroke-width="3.4" stroke-linecap="round"/><path d="M16.6 16.8 L22 21.8" stroke="#a85c54" stroke-width="2" stroke-linecap="round"/></svg>
<div class="a" style="left:24px;top:349px;width:22px;height:1px;background:#6a9ee0"></div>
<svg class="a" style="left:23px;top:363px" width="24" height="24" viewBox="0 0 24 24"><circle cx="12" cy="11.7" r="11.5" fill="#2a78c8"/><path d="M8.2 9.2 Q8.2 5.2 12.2 5.2 Q16 5.2 16 8.6 Q16 10.8 13.6 11.8 Q12.4 12.4 12.4 14.2" fill="none" stroke="#eef4fb" stroke-width="2.6"/><circle cx="12.4" cy="17.6" r="1.6" fill="#eef4fb"/></svg>
</body></html>
